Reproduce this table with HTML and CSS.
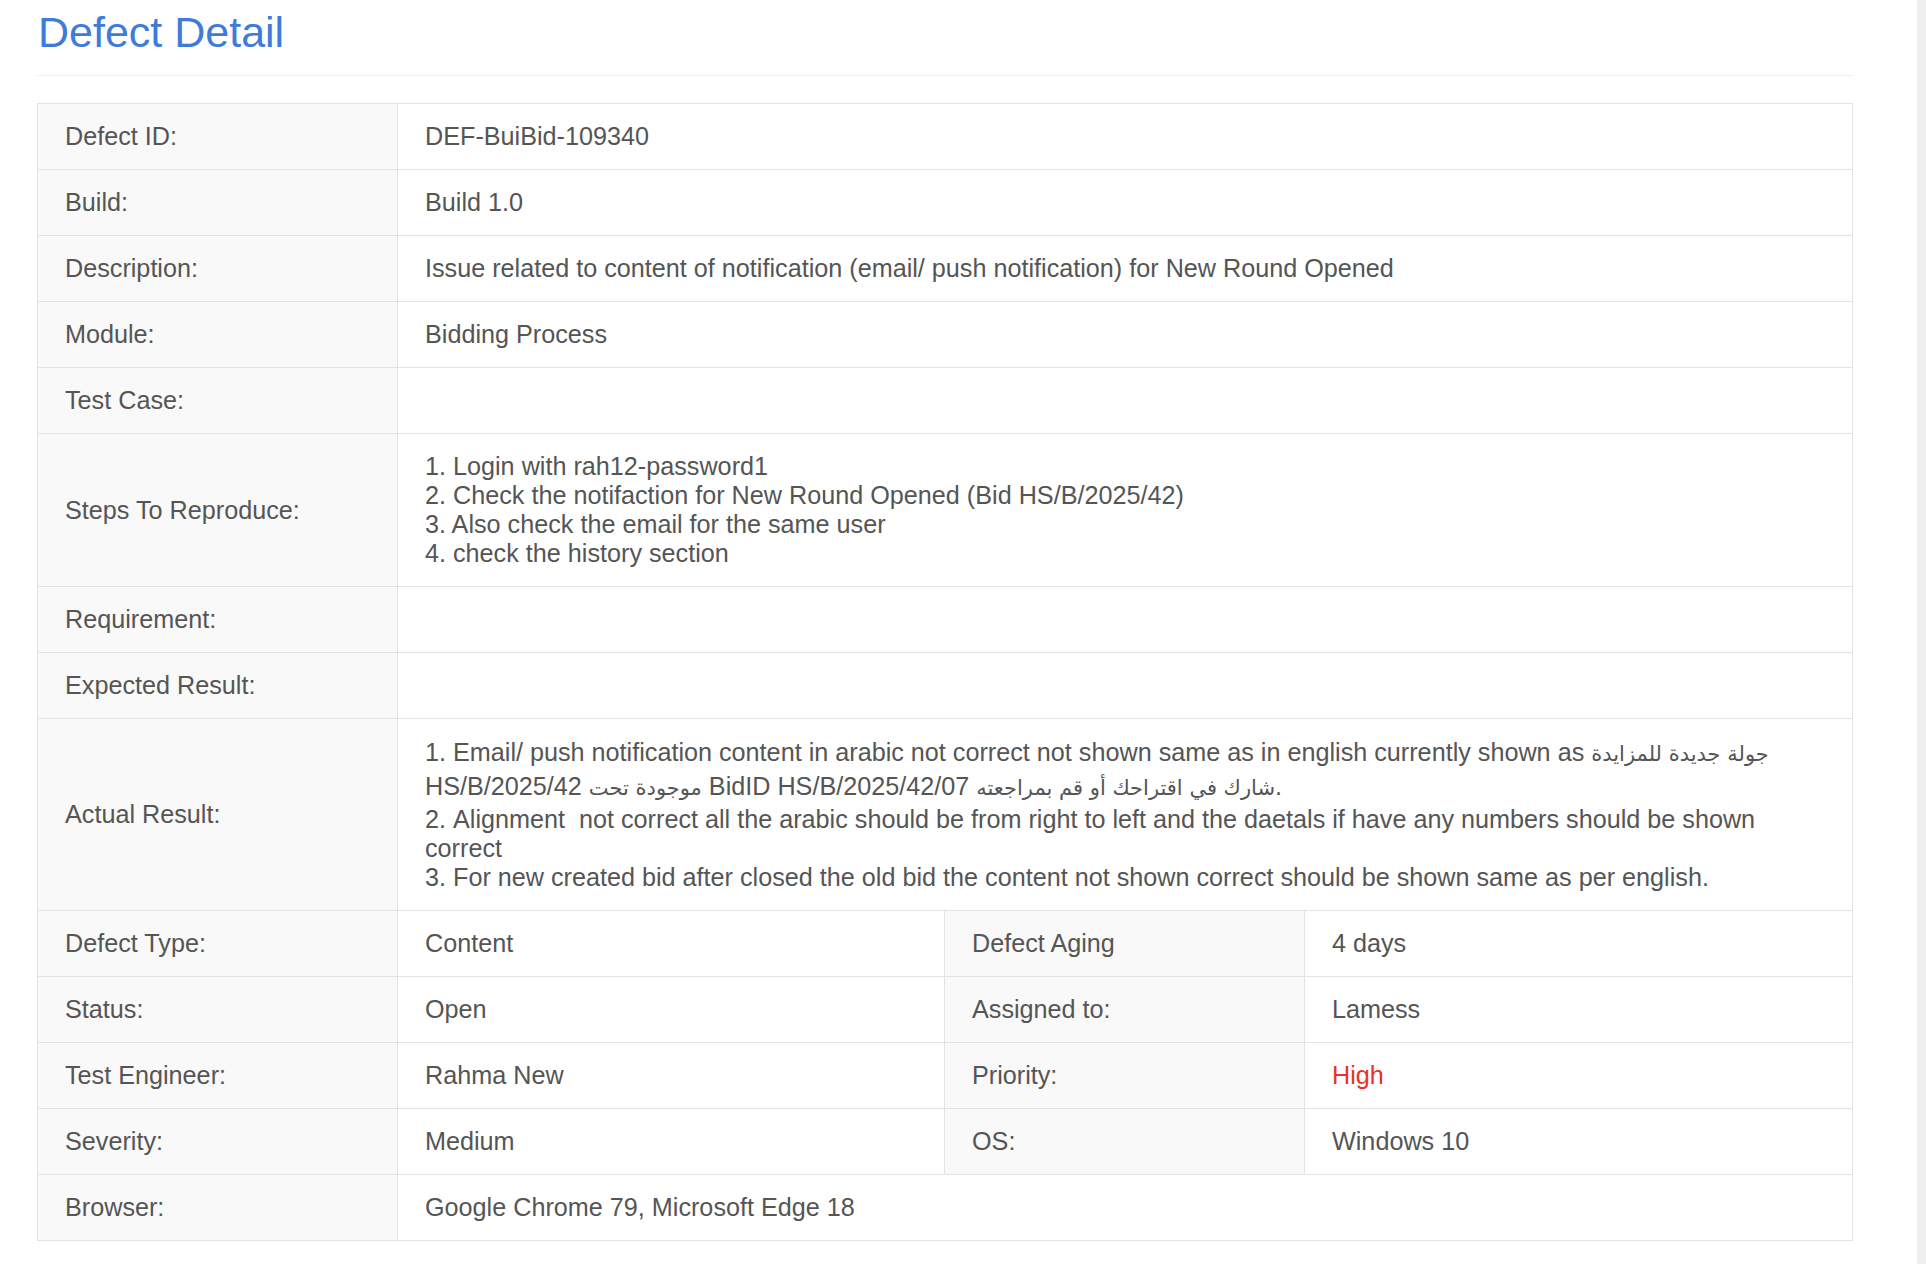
FILE: index.html
```html
<!DOCTYPE html>
<html lang="en">
<head>
<meta charset="utf-8">
<title>Defect Detail</title>
<link rel="stylesheet" href="styles.css">
</head>
<body>
<div class="page">
  <main class="main">
    <h1 class="title">Defect Detail</h1>
    <div class="rule"></div>
    <table class="detail">
      <colgroup>
        <col class="c-label">
        <col class="c-value">
        <col class="c-label">
        <col>
      </colgroup>
      <tbody>
        <tr><th>Defect ID:</th><td colspan="3">DEF-BuiBid-109340</td></tr>
        <tr><th>Build:</th><td colspan="3">Build 1.0</td></tr>
        <tr><th>Description:</th><td colspan="3">Issue related to content of notification (email/ push notification) for New Round Opened</td></tr>
        <tr><th>Module:</th><td colspan="3">Bidding Process</td></tr>
        <tr><th>Test Case:</th><td colspan="3"></td></tr>
        <tr><th>Steps To Reproduce:</th><td colspan="3">1. Login with rah12-password1<br>2. Check the notifaction for New Round Opened (Bid HS/B/2025/42)<br>3. Also check the email for the same user<br>4. check the history section</td></tr>
        <tr><th>Requirement:</th><td colspan="3"></td></tr>
        <tr><th>Expected Result:</th><td colspan="3"></td></tr>
        <tr><th>Actual Result:</th><td colspan="3">1. Email/ push notification content in arabic not correct not shown same as in english currently shown as <span class="ar">جولة جديدة للمزايدة</span> HS/B/2025/42 <span class="ar">موجودة تحت</span> BidID HS/B/2025/42/07 <span class="ar">شارك في اقتراحك أو قم بمراجعته</span>.<br>2. Alignment&nbsp; not correct all the arabic should be from right to left and the daetals if have any numbers should be shown correct<br>3. For new created bid after closed the old bid the content not shown correct should be shown same as per english.</td></tr>
        <tr><th>Defect Type:</th><td>Content</td><th>Defect Aging</th><td>4 days</td></tr>
        <tr><th>Status:</th><td>Open</td><th>Assigned to:</th><td>Lamess</td></tr>
        <tr><th>Test Engineer:</th><td>Rahma New</td><th>Priority:</th><td class="high">High</td></tr>
        <tr><th>Severity:</th><td>Medium</td><th>OS:</th><td>Windows 10</td></tr>
        <tr><th>Browser:</th><td colspan="3">Google Chrome 79, Microsoft Edge 18</td></tr>
      </tbody>
    </table>
  </main>
  <div class="gutter"></div>
</div>
</body>
</html>
```

FILE: styles.css
```css
html, body {
  margin: 0;
  padding: 0;
  background: #ffffff;
}

body {
  font-family: "Liberation Sans", Arial, Helvetica, sans-serif;
  color: #555555;
}

.page {
  display: flex;
  min-height: 1264px;
}

.main {
  flex: 1;
  padding: 9px 64px 0 37px;
  min-width: 0;
}

.gutter {
  width: 9px;
  flex: 0 0 9px;
  background: #efefef;
}

.title {
  margin: 0;
  font-size: 43px;
  line-height: 46px;
  font-weight: normal;
  color: #3e7bdb;
  padding-left: 1px;
}

.rule {
  height: 1px;
  background: #eeeeee;
  margin: 20px 0 27px;
}

.detail {
  width: 100%;
  border-collapse: collapse;
  table-layout: fixed;
  border: 1px solid #e2e3e8;
  font-size: 25.2px;
}

.c-label {
  width: 360px;
}

.c-value {
  width: 547px;
}

.detail th,
.detail td {
  border: 1px solid #e2e3e8;
  padding: 18px 26px 18px 27px;
  line-height: 29px;
  text-align: left;
  vertical-align: middle;
  font-weight: normal;
  color: #555555;
}

.detail th {
  background: #f9f9f9;
}

.detail td {
  background: #ffffff;
}

.detail td.high {
  color: #ea3323;
}

.ar {
  font-family: "DejaVu Sans", "Noto Sans", sans-serif;
  font-size: 21px;
  line-height: 34px;
}
```
